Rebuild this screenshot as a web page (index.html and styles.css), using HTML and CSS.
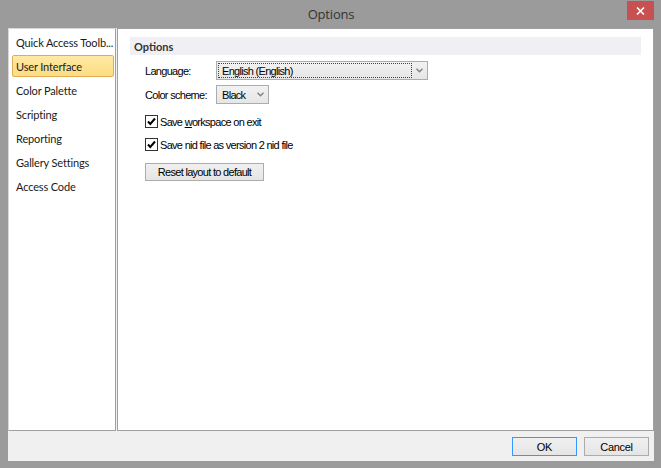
FILE: index.html
```html
<!DOCTYPE html>
<html>
  <head>
    <meta charset="UTF-8">
    <title>Options</title>
    <link rel="stylesheet" href="styles.css">
  </head>
  <body>
<div class="window">
  <div class="titlebar">
    <span class="title">Options</span>
    <span class="close">
      <svg width="9" height="8" viewBox="0 0 9 8"><path d="M1 0.5 L8 7.5 M8 0.5 L1 7.5" stroke="#fff" stroke-width="1.6" fill="none"/></svg>
    </span>
  </div>
  <div class="client">
    <div class="panels">
      <ul class="nav">
        <li>Quick Access Toolb...</li>
        <li class="active">User Interface</li>
        <li>Color Palette</li>
        <li>Scripting</li>
        <li>Reporting</li>
        <li>Gallery Settings</li>
        <li>Access Code</li>
      </ul>
      <div class="page">
        <div class="section">Options</div>
        <div class="form">
          <div class="row row-lang">
            <span class="label">Language:</span>
            <div class="combo combo-lang">
              <span class="value focused">English (English)</span>
              <span class="arrow"><svg width="7" height="5" viewBox="0 0 7 5"><path d="M0.5 0.8 L3.5 3.8 L6.5 0.8" stroke="#808080" stroke-width="1.4" fill="none"/></svg></span>
            </div>
          </div>
          <div class="row row-scheme">
            <span class="label">Color scheme:</span>
            <div class="combo combo-scheme">
              <span class="value">Black</span>
              <span class="arrow"><svg width="7" height="5" viewBox="0 0 7 5"><path d="M0.5 0.8 L3.5 3.8 L6.5 0.8" stroke="#808080" stroke-width="1.4" fill="none"/></svg></span>
            </div>
          </div>
          <div class="row check-row check-first">
            <span class="checkbox"><svg width="11" height="11" viewBox="0 0 11 11"><path d="M2 5.5 L4.3 8 L9 2.5" stroke="#000" stroke-width="2" fill="none"/></svg></span>
            <span class="check-text">Save <u>w</u>orkspace on exit</span>
          </div>
          <div class="row check-row check-second">
            <span class="checkbox"><svg width="11" height="11" viewBox="0 0 11 11"><path d="M2 5.5 L4.3 8 L9 2.5" stroke="#000" stroke-width="2" fill="none"/></svg></span>
            <span class="check-text">Save nid file as version 2 nid file</span>
          </div>
          <button class="btn btn-reset">Reset layout to default</button>
        </div>
      </div>
    </div>
    <div class="buttons">
      <button class="btn btn-ok">OK</button>
      <button class="btn">Cancel</button>
    </div>
  </div>
</div>
  </body>
</html>
```

FILE: styles.css
```css
*, ::after, ::before {
    box-sizing: border-box;
}

html, body {
    margin: 0;
    padding: 0;
}

body {
    width: 661px;
    height: 468px;
    overflow: hidden;
    background: #9b9b9b;
}

.window {
    width: 661px;
    height: 468px;
    background: #9b9b9b;
    display: flex;
    flex-direction: column;
    padding: 0 7px 7px 8px;
}

.titlebar {
    height: 28px;
    flex: none;
    display: grid;
    grid-template-columns: 1fr auto 1fr;
    align-items: start;
}

.title {
    grid-column: 2;
    font-family: "Open Sans", sans-serif;
    font-size: 13px;
    letter-spacing: -0.2px;
    color: #333;
    padding-top: 5px;
}

.close {
    grid-column: 3;
    justify-self: end;
    width: 27px;
    height: 19px;
    margin-top: 1px;
    background: #c75050;
    display: flex;
    align-items: center;
    justify-content: center;
}

.client {
    flex: 1;
    background: #f0f0f0;
    display: flex;
    flex-direction: column;
}

.panels {
    height: 403px;
    flex: none;
    display: flex;
    gap: 1px;
}

.nav {
    width: 108px;
    margin: 0;
    padding: 2px 0 0 3px;
    list-style: none;
    background: #fff;
    border: 1px solid #a0a0a0;
    border-left-color: #d8d8d8;
    border-top-color: #d8d8d8;
}

.nav li {
    width: 102px;
    height: 22px;
    margin-bottom: 2px;
    padding-left: 3px;
    border: 1px solid transparent;
    border-radius: 2px;
    display: flex;
    align-items: center;
    font-family: Lato, sans-serif;
    font-size: 11px;
    letter-spacing: -0.15px;
    color: #1a1a1a;
    white-space: nowrap;
}

.nav li.active {
    background: linear-gradient(#fee9a6, #fddc80);
    border-color: #e2ad55;
}

.page {
    flex: 1;
    background: #fff;
    border: 1px solid #a0a0a0;
    padding: 8px 12px 0 12px;
    font-family: "Liberation Sans", Arial, sans-serif;
    font-size: 11px;
    letter-spacing: -0.7px;
    color: #000;
}

.section {
    height: 18px;
    background: #f0f0f4;
    padding-left: 4px;
    display: flex;
    align-items: center;
    font-family: Lato, sans-serif;
    font-weight: bold;
    font-size: 11px;
    letter-spacing: 0;
    color: #333;
}

.form {
    padding-left: 15px;
    display: flex;
    flex-direction: column;
    align-items: flex-start;
}

.row {
    display: flex;
    align-items: center;
}

.row-lang {
    margin-top: 6px;
    height: 19px;
}

.row-scheme {
    margin-top: 5px;
    height: 19px;
}

.label {
    width: 71px;
}

.combo {
    height: 19px;
    border: 1px solid #acacac;
    background: linear-gradient(#f2f2f2, #e6e6e6);
    display: flex;
    align-items: center;
}

.combo-lang {
    width: 212px;
}

.combo-scheme {
    width: 53px;
}

.combo .value {
    flex: 1;
    height: 15px;
    margin-left: 1px;
    padding-left: 3px;
    border: 1px dotted transparent;
    display: flex;
    align-items: center;
}

.combo .value.focused {
    border-color: #444;
}

.arrow {
    width: 15px;
    display: flex;
    align-items: center;
    justify-content: center;
}

.check-row {
    height: 13px;
}

.check-first {
    margin-top: 11px;
}

.check-second {
    margin-top: 10px;
}

.checkbox {
    width: 13px;
    height: 13px;
    border: 1px solid #333;
    background: #fff;
    display: flex;
    align-items: center;
    justify-content: center;
}

.check-text {
    margin-left: 2px;
}

.btn {
    width: 65px;
    height: 19px;
    padding: 0;
    border: 1px solid #acacac;
    background: linear-gradient(#f0f0f0, #e5e5e5);
    font-family: "Liberation Sans", Arial, sans-serif;
    font-size: 11px;
    letter-spacing: -0.3px;
    color: #000;
}

.btn-reset {
    margin-top: 12px;
    width: 119px;
    height: 18px;
    letter-spacing: -0.7px;
}

.buttons {
    flex: 1;
    display: flex;
    justify-content: flex-end;
    gap: 7px;
    padding: 6px 5px 0 0;
}

.btn-ok {
    border-color: #3399ff;
}
```
